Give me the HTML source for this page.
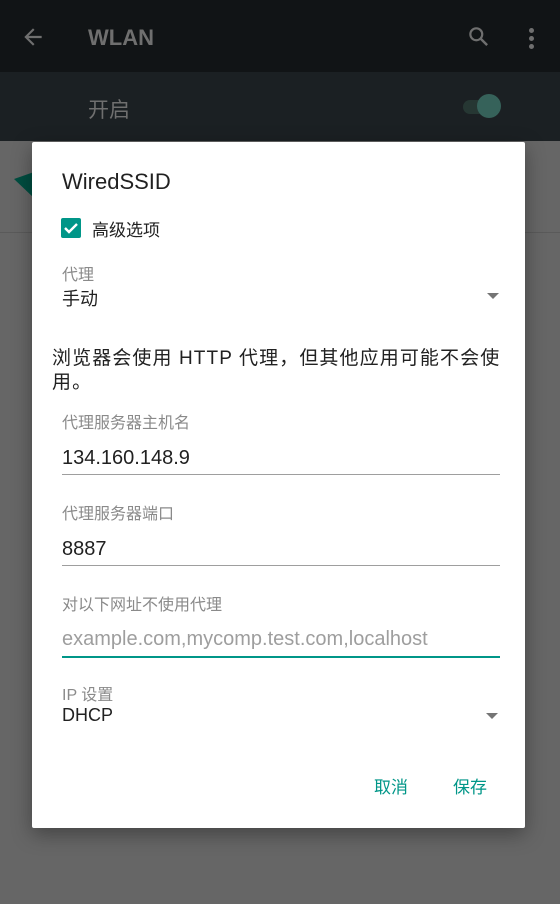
<!DOCTYPE html>
<html><head><meta charset="utf-8"><style>
*{margin:0;padding:0;box-sizing:border-box}
body{width:560px;height:904px;overflow:hidden;background:#666;font-family:"Liberation Sans","Noto Sans CJK SC",sans-serif;position:relative}
.a{position:absolute;white-space:nowrap}
.lbl{color:#8a8a8a;font-size:16px}
.val{color:#212121;font-size:20px}
.line{position:absolute;left:62px;width:438px;height:1px;background:#9e9e9e}
.tri{position:absolute;width:0;height:0;border-left:6px solid transparent;border-right:6px solid transparent;border-top:6px solid #757575}
</style></head><body>
<div class="a" style="left:0;top:0;width:560px;height:72px;background:#111416"></div>
<div class="a" style="left:0;top:72px;width:560px;height:69px;background:#1b2023"></div>
<svg class="a" style="left:20px;top:24px" width="26" height="26" viewBox="0 0 24 24"><path d="M20 11H7.8l5.6-5.6L12 4l-8 8 8 8 1.4-1.4L7.8 13H20z" fill="#6f6f6f"/></svg>
<div class="a" style="left:88px;top:25px;color:#6f6f6f;font-size:22px;font-weight:bold">WLAN</div>
<svg class="a" style="left:466px;top:24px" width="26" height="26" viewBox="0 0 24 24"><circle cx="9.5" cy="9.5" r="5.5" fill="none" stroke="#6f6f6f" stroke-width="2"/><path d="M13.5 13.5l6 6" stroke="#6f6f6f" stroke-width="2.2"/></svg>
<div class="a" style="left:529px;top:28px;width:5px;height:5px;border-radius:50%;background:#6f6f6f;box-shadow:0 8px 0 #6f6f6f,0 16px 0 #6f6f6f"></div>
<div class="a" style="left:88px;top:94px;color:#6f6f6f;font-size:21px">开启</div>
<div class="a" style="left:463px;top:100px;width:36px;height:14px;border-radius:7px;background:#263733"></div>
<div class="a" style="left:477px;top:94px;width:24px;height:24px;border-radius:50%;background:#36625a"></div>
<svg class="a" style="left:12px;top:170px" width="22" height="32"><path d="M2 9 L22 2 L22 28 Z" fill="#004d40"/></svg>
<div class="a" style="left:0;top:232px;width:560px;height:1px;background:#5a5a5a"></div>
<div class="a" style="left:32px;top:142px;width:493px;height:686px;background:#fff;border-radius:2px;box-shadow:0 6px 20px rgba(0,0,0,.35)"></div>
<div class="a" style="left:62px;top:169px;font-size:22px;color:#212121">WiredSSID</div>
<div class="a" style="left:61px;top:218px;width:20px;height:20px;border-radius:2px;background:#009688"></div>
<svg class="a" style="left:61px;top:218px" width="20" height="20"><path d="M4 10l4 4 8-8" fill="none" stroke="#fff" stroke-width="2.4"/></svg>
<div class="a" style="left:92px;top:216px;font-size:17px;color:#212121">高级选项</div>
<div class="a lbl" style="left:62px;top:261px">代理</div>
<div class="a" style="left:62px;top:285px;font-size:18px;color:#212121">手动</div>
<div class="tri" style="left:487px;top:293px"></div>
<div class="a" style="left:52px;top:347px;font-size:19px;color:#212121;line-height:24px;letter-spacing:1.1px">浏览器会使用 HTTP 代理，但其他应用可能不会使<br>用。</div>
<div class="a lbl" style="left:62px;top:409px">代理服务器主机名</div>
<div class="a val" style="left:62px;top:447px">134.160.148.9</div>
<div class="line" style="top:474px"></div>
<div class="a lbl" style="left:62px;top:500px">代理服务器端口</div>
<div class="a val" style="left:62px;top:538px">8887</div>
<div class="line" style="top:565px"></div>
<div class="a lbl" style="left:62px;top:591px">对以下网址不使用代理</div>
<div class="a" style="left:62px;top:628px;font-size:20px;color:#9e9e9e">example.com,mycomp.test.com,localhost</div>
<div class="line" style="top:656px;height:2px;background:#009688"></div>
<div class="a lbl" style="left:62px;top:681px">IP 设置</div>
<div class="a" style="left:62px;top:705px;font-size:18px;color:#212121">DHCP</div>
<div class="tri" style="left:486px;top:713px"></div>
<div class="a" style="left:374px;top:773px;font-size:17px;color:#009688">取消</div>
<div class="a" style="left:453px;top:773px;font-size:17px;color:#009688">保存</div>
</body></html>
